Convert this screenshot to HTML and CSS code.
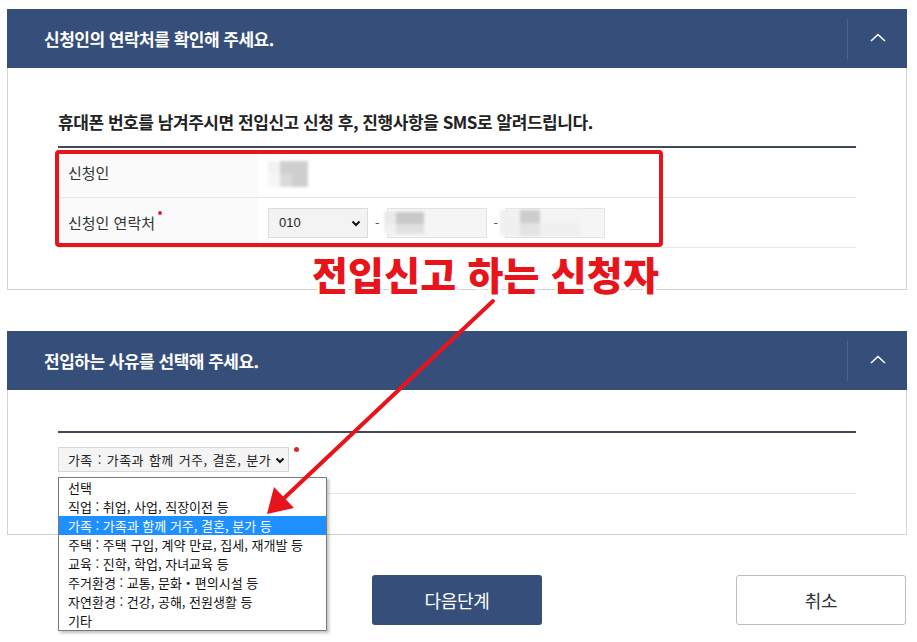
FILE: index.html
```html
<!DOCTYPE html>
<html lang="ko">
<head>
<meta charset="utf-8">
<title>전입신고</title>
<link rel="stylesheet" href="styles.css">
</head>
<body>
<div class="page">
  <section class="panel">
    <header class="panel-head">
      <h2 class="panel-title">신청인의 연락처를 확인해 주세요.</h2>
      <span class="toggle"><svg width="16" height="9" viewBox="0 0 16 9"><polyline points="1,8 8,1.5 15,8" fill="none" stroke="#fff" stroke-width="1.6"/></svg></span>
    </header>
    <div class="panel-body">
      <p class="lead">휴대폰 번호를 남겨주시면 전입신고 신청 후, 진행사항을 SMS로 알려드립니다.</p>
      <div class="table">
        <div class="row">
          <div class="th">신청인</div>
          <div class="td"><span class="blur blur-name"></span></div>
        </div>
        <div class="row">
          <div class="th">신청인 연락처<span class="req"></span></div>
          <div class="td">
            <span class="select sel-phone">010<svg class="caret" width="10" height="7" viewBox="0 0 10 7"><polyline points="1.5,1.5 5,5 8.5,1.5" fill="none" stroke="#111" stroke-width="2"/></svg></span>
            <span class="dash">-</span>
            <span class="input"><span class="blur blur-a"></span></span>
            <span class="dash">-</span>
            <span class="input"><span class="blur blur-b"></span></span>
          </div>
        </div>
      </div>
    </div>
  </section>

  <section class="panel panel-2">
    <header class="panel-head">
      <h2 class="panel-title">전입하는 사유를 선택해 주세요.</h2>
      <span class="toggle"><svg width="16" height="9" viewBox="0 0 16 9"><polyline points="1,8 8,1.5 15,8" fill="none" stroke="#fff" stroke-width="1.6"/></svg></span>
    </header>
    <div class="panel-body panel-body-2">
      <div class="table">
        <div class="row row-reason">
          <span class="select sel-reason"><span class="sel-text">가족 : 가족과 함께 거주, 결혼, 분가 등</span><svg class="caret" width="10" height="7" viewBox="0 0 10 7"><polyline points="1.5,1.5 5,5 8.5,1.5" fill="none" stroke="#111" stroke-width="2"/></svg></span>
          <span class="req req-reason"></span>
        </div>
      </div>
    </div>
  </section>

  <div class="actions">
    <span></span>
    <button class="btn btn-primary">다음단계</button>
    <button class="btn btn-cancel">취소</button>
  </div>

  <ul class="dropdown">
    <li>선택</li>
    <li>직업 : 취업, 사업, 직장이전 등</li>
    <li class="active">가족 : 가족과 함께 거주, 결혼, 분가 등</li>
    <li>주택 : 주택 구입, 계약 만료, 집세, 재개발 등</li>
    <li>교육 : 진학, 학업, 자녀교육 등</li>
    <li>주거환경 : 교통, 문화・편의시설 등</li>
    <li>자연환경 : 건강, 공해, 전원생활 등</li>
    <li>기타</li>
  </ul>

  <!-- annotations -->
  <div class="mark-box"></div>
  <div class="mark-text">전입신고 하는 신청자</div>
  <svg class="mark-arrow" width="917" height="642" viewBox="0 0 917 642">
    <line x1="493" y1="301" x2="281" y2="501" stroke="#e8141c" stroke-width="4" stroke-linecap="round"/>
    <polygon points="267,514 274,487 294,508" fill="#e8141c"/>
  </svg>
</div>
</body>
</html>
```

FILE: styles.css
```css
* { box-sizing: border-box; }
html, body { margin: 0; padding: 0; background: #fff; }
body {
  font-family: "Noto Sans CJK KR", "Noto Sans", sans-serif;
  color: #222;
  width: 917px;
  height: 642px;
  overflow: hidden;
}
.page {
  position: relative;
  padding: 9px 10px 0 7px;
  width: 917px;
  height: 642px;
}
.panel { width: 900px; }
.panel-2 { margin-top: 41px; }
.panel-head {
  height: 59px;
  background: #354e7a;
  display: flex;
  align-items: center;
}
.panel-title {
  flex: 1;
  margin: 0;
  padding-left: 37px;
  color: #fff;
  font-size: 17px;
  font-weight: 700;
  letter-spacing: -0.5px;
  line-height: 20px;
}
.toggle {
  width: 60px;
  height: 40px;
  border-left: 1px solid rgba(255,255,255,0.13);
  display: flex;
  align-items: center;
  justify-content: center;
  padding-bottom: 2px;
}
.panel-body {
  border: 1px solid #d3d3d3;
  border-top: 0;
  padding: 42px 50px 41px 50px;
}
.lead {
  margin: 0 0 12px 0;
  font-size: 17px;
  line-height: 24px;
  font-weight: 700;
  letter-spacing: -0.45px;
  color: #222;
}
.table { border-top: 2px solid #3c4a5b; }
.row {
  display: flex;
  height: 50px;
  border-bottom: 1px solid #e7e7e7;
}
.th {
  width: 200px;
  background: #fafafa;
  display: flex;
  align-items: center;
  padding-left: 10px;
  font-size: 15px;
  color: #333;
}
.td {
  flex: 1;
  display: flex;
  align-items: center;
  padding-left: 10px;
}
.req {
  display: inline-block;
  width: 4px;
  height: 4px;
  border-radius: 50%;
  background: #d8262b;
  align-self: flex-start;
  margin-top: 13px;
  margin-left: 3px;
}
.blur { display: inline-block; filter: blur(1.4px); }
.blur-name {
  width: 40px; height: 26px;
  margin-top: 2px;
  background:
    linear-gradient(90deg, #f2f2f2 0 30%, #cfcfcf 30% 100%) top/100% 50% no-repeat,
    linear-gradient(90deg, #f6f6f6 0 30%, #dadada 30% 60%, #cfcfcf 60% 100%) bottom/100% 50% no-repeat;
}
.select {
  display: inline-flex;
  align-items: center;
  position: relative;
  background: #f3f3f3;
  border: 1px solid #dcdcdc;
  font-size: 13px;
  color: #222;
  font-family: "Liberation Sans", "Noto Sans CJK KR", sans-serif;
}
.caret { position: absolute; right: 6px; top: 50%; margin-top: -3px; }
.sel-phone { width: 100px; height: 30px; padding-left: 10px; }
.dash { color: #555; font-size: 13px; margin: 0 7px; }
.input {
  display: inline-flex;
  align-items: center;
  width: 100px;
  height: 30px;
  background: #f5f5f5;
  border: 1px solid #e3e3e3;
}
.blur-a {
  width: 40px; height: 22px; margin-left: -4px;
  background:
    linear-gradient(90deg, #eaeaea 0 30%, #c9c9c9 30% 100%) top/100% 55% no-repeat,
    linear-gradient(90deg, #f1f1f1 0 30%, #e0e0e0 30% 100%) bottom/100% 45% no-repeat;
}
.blur-b {
  width: 80px; height: 26px; margin-left: -6px;
  background:
    linear-gradient(90deg, #f0f0f0 0 25%, #cdcdcd 25% 50%, #f4f4f4 50% 100%) top/100% 50% no-repeat,
    linear-gradient(90deg, #f0f0f0 0 25%, #e3e3e3 25% 50%, #f0f0f0 50% 100%) bottom/100% 50% no-repeat;
}

.panel-body-2 { padding: 41px 50px 40px 50px; }
.row-reason {
  height: 61px;
  align-items: flex-start;
  padding-top: 14px;
}
.sel-reason {
  width: 231px;
  height: 25px;
  padding-left: 9px;
  background: #f4f4f4;
  border: 1px solid #d6d6d6;
  font-family: "Noto Sans CJK KR", sans-serif;
  overflow: hidden;
  white-space: nowrap;
}
.sel-text {
  display: block;
  width: 206px;
  overflow: hidden;
  letter-spacing: 0.4px;
  word-spacing: 1px;
  color: #222;
}
.sel-reason .caret { right: 3px; }
.req-reason { margin-top: 0; margin-left: 5px; width: 5px; height: 5px; }

.actions {
  margin-top: 40px;
  width: 900px;
  display: grid;
  grid-template-columns: 1fr 170px 1fr;
  align-items: center;
}
.btn {
  width: 170px;
  height: 50px;
  border-radius: 3px;
  font-family: "Noto Sans CJK KR", sans-serif;
  font-size: 18px;
  letter-spacing: -0.3px;
  cursor: pointer;
}
.btn-primary {
  background: #354e7a;
  border: 0;
  color: #fff;
}
.btn-cancel {
  justify-self: end;
  margin-right: 1px;
  background: #fff;
  border: 1px solid #bdbdbd;
  color: #333;
}

/* annotations */
.mark-box {
  position: absolute;
  left: 55px;
  top: 150px;
  width: 608px;
  height: 97px;
  border: 4px solid #e8141c;
  border-radius: 4px;
}
.mark-text {
  position: absolute;
  left: 312px;
  top: 247px;
  font-family: "Noto Sans CJK KR", sans-serif;
  font-weight: 900;
  font-size: 39px;
  line-height: 52px;
  letter-spacing: 0.2px;
  color: #e8141c;
  -webkit-text-stroke: 5px #fff;
  paint-order: stroke fill;
  white-space: nowrap;
}
.mark-arrow {
  position: absolute;
  left: 0;
  top: 0;
  pointer-events: none;
}

.dropdown {
  position: absolute;
  left: 58px;
  top: 477px;
  width: 269px;
  margin: 0;
  padding: 0;
  list-style: none;
  background: #fff;
  border: 1px solid #7a7a7a;
  box-shadow: 2px 2px 3px rgba(0,0,0,0.25);
  font-size: 13px;
  color: #111;
}
.dropdown li {
  height: 19px;
  line-height: 19px;
  padding-left: 9px;
  white-space: nowrap;
  letter-spacing: 0;
}
.dropdown li.active {
  background: #1e90ff;
  color: #fff;
}
```
